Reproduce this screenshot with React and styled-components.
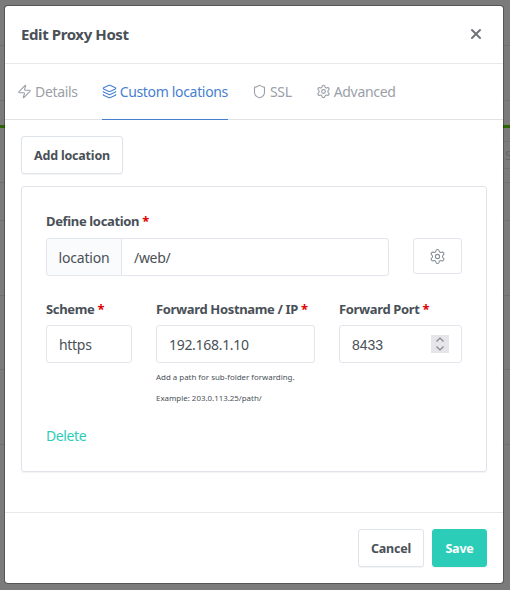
import { createGlobalStyle, styled } from "styled-components";
import { Zap, Layers, Shield, Settings, X } from "lucide-react";

const GlobalStyle = createGlobalStyle`
    html, body {
        margin: 0;
        padding: 0;
        background: #7f7f7f;
        font-family: "Noto Sans", "Open Sans", sans-serif;
    }
    * {
        box-sizing: border-box;
    }
`;

const Page = styled.div`
    position: relative;
    width: 510px;
    height: 590px;
    overflow: hidden;
    background: #7b7b7b;
`;

const BackdropRow = styled.div`
    height: ${prop => prop.height}px;
    margin-left: ${prop => prop.offset || 0}px;
    padding-left: ${prop => prop.indent || 0}px;
    display: flex;
    align-items: center;
    font-size: 13px;
    color: #666;
    border-bottom: 1px solid ${prop => (prop.plain ? "transparent" : "#707070")};
`;

const GreenLine = styled.div`
    height: 3px;
    background: #2c6600;
`;

const Modal = styled.div`
    position: absolute;
    left: 5px;
    top: 6px;
    width: 498px;
    height: 577px;
    background: #fff;
    border-radius: 3px;
    box-shadow: 0 0 0 1px rgba(0, 0, 0, 0.3);
    display: flex;
    flex-direction: column;
    color: #495057;
`;

const Header = styled.div`
    height: 58px;
    padding: 0 19px 1px 16px;
    display: flex;
    justify-content: space-between;
    align-items: center;
    border-bottom: 1px solid #e6e8ea;
    h5 {
        margin: 0;
        font-size: 15px;
        font-weight: 700;
        letter-spacing: -0.4px;
        color: #495057;
    }
`;

const CloseButton = styled.span`
    display: flex;
    color: #6e7479;
`;

const Tabs = styled.div`
    height: 56px;
    padding: 0 0 0 12px;
    display: flex;
    gap: 24px;
    border-bottom: 1px solid #e0e2e5;
`;

const Tab = styled.div`
    display: flex;
    align-items: center;
    gap: 3px;
    height: 56px;
    font-size: 14px;
    letter-spacing: -0.33px;
    color: ${prop => (prop.active ? "#467fcf" : "#9aa0a8")};
    border-bottom: 1px solid ${prop => (prop.active ? "#467fcf" : "transparent")};
`;

const Body = styled.div`
    flex: 1;
    padding: 16px 16px 0;
`;

const Button = styled.button`
    height: 38px;
    padding: 0 12px;
    font-family: inherit;
    font-size: 12.5px;
    font-weight: 700;
    letter-spacing: -0.2px;
    border-radius: 3px;
    color: ${prop => (prop.primary ? "#fff" : "#495057")};
    background: ${prop => (prop.primary ? "#2bcdb8" : "#fff")};
    border: 1px solid ${prop => (prop.primary ? "#2bcdb8" : "#dfe3ea")};
    box-shadow: 0 1px 1px rgba(0, 0, 0, 0.05);
`;

const AddButton = styled(Button)`
    width: 102px;
    padding: 0;
`;

const Card = styled.div`
    margin-top: 12px;
    height: 286px;
    padding: 24px 24px 0;
    border: 1px solid #e0e4ea;
    border-radius: 3px;
    box-shadow: 0 1px 1px rgba(0, 0, 0, 0.05);
`;

const Label = styled.div`
    height: 20px;
    margin-bottom: ${prop => (prop.tight ? 6 : 7)}px;
    font-size: 13px;
    line-height: 20px;
    font-weight: 700;
    letter-spacing: -0.35px;
    white-space: nowrap;
    span {
        color: #e00000;
    }
`;

const LocationRow = styled.div`
    display: flex;
    align-items: flex-start;
    gap: 24px;
`;

const LocationGroup = styled.div`
    display: flex;
    width: 343px;
    height: 38px;
    font-size: 14px;
    letter-spacing: -0.2px;
`;

const LocationAddon = styled.div`
    width: 76px;
    display: flex;
    align-items: center;
    justify-content: center;
    background: #fafbfc;
    border: 1px solid #e3e6ec;
    border-radius: 3px 0 0 3px;
`;

const Field = styled.div`
    flex: 1;
    height: 38px;
    display: flex;
    align-items: center;
    justify-content: space-between;
    padding: 1px 12px 0;
    border: 1px solid #e3e6ec;
    border-left: ${prop => (prop.joined ? "0" : "1px solid #e3e6ec")};
    border-radius: ${prop => (prop.joined ? "0 3px 3px 0" : "3px")};
    font-size: 14px;
    letter-spacing: -0.3px;
`;

const GearButton = styled.div`
    width: 49px;
    height: 36px;
    display: flex;
    align-items: center;
    justify-content: center;
    border: 1px solid #e3e6ec;
    border-radius: 3px;
    color: #868e96;
`;

const FormRow = styled.div`
    display: grid;
    grid-template-columns: 86px 159px 123px;
    gap: 24px;
    margin-top: 23px;
`;

const PortValue = styled.span`
    font-family: "Liberation Sans", Arial, sans-serif;
    font-size: 14px;
    letter-spacing: 0;
`;

const Spinner = styled.svg`
    display: block;
    width: 18px;
    height: 18px;
    margin-top: -1px;
    background: #e6e6ea;
`;

const Hint = styled.p`
    margin: ${prop => (prop.first ? 8 : 9)}px 0 0;
    font-size: 7.9px;
    line-height: 12px;
    white-space: nowrap;
    color: #495057;
`;

const DeleteLink = styled.div`
    margin-top: 22px;
    font-size: 14px;
    letter-spacing: -0.4px;
    color: #2bcdb8;
`;

const Footer = styled.div`
    height: 71px;
    padding: 0 16px;
    display: flex;
    align-items: center;
    justify-content: flex-end;
    gap: 8px;
    border-top: 1px solid #e6e8ea;
`;

const FooterSlot = styled.div`
    width: ${prop => prop.width}px;
    ${Button} {
        width: 100%;
    }
`;

const tabs = [
    { label: "Details", Icon: Zap },
    { label: "Custom locations", Icon: Layers, active: true },
    { label: "SSL", Icon: Shield },
    { label: "Advanced", Icon: Settings },
];

const Required = () => <span> *</span>;

const App = () => {
    return (
        <Page>
            <GlobalStyle />
            <BackdropRow height={46} />
            <BackdropRow height={55} />
            <BackdropRow height={24} plain />
            <GreenLine />
            <BackdropRow height={14} offset={400} />
            <BackdropRow height={27} offset={400} indent={105}>S</BackdropRow>
            <BackdropRow height={14} />
            <BackdropRow height={38} />
            <BackdropRow height={75} />
            <BackdropRow height={74} />
            <BackdropRow height={75} />
            <Modal>
                <Header>
                    <h5>Edit Proxy Host</h5>
                    <CloseButton><X size={16} strokeWidth={3} /></CloseButton>
                </Header>
                <Tabs>
                    {tabs.map(({ label, Icon, active }) => (
                        <Tab key={label} active={active}>
                            <Icon size={15} strokeWidth={1.75} />
                            {label}
                        </Tab>
                    ))}
                </Tabs>
                <Body>
                    <AddButton>Add location</AddButton>
                    <Card>
                        <Label>Define location<Required /></Label>
                        <LocationRow>
                            <LocationGroup>
                                <LocationAddon>location</LocationAddon>
                                <Field joined>/web/</Field>
                            </LocationGroup>
                            <GearButton><Settings size={17} strokeWidth={1.5} /></GearButton>
                        </LocationRow>
                        <FormRow>
                            <div>
                                <Label tight>Scheme<Required /></Label>
                                <Field>https</Field>
                            </div>
                            <div>
                                <Label tight>Forward Hostname / IP<Required /></Label>
                                <Field>192.168.1.10</Field>
                                <Hint first>Add a path for sub-folder forwarding.</Hint>
                                <Hint>Example: 203.0.113.25/path/</Hint>
                            </div>
                            <div>
                                <Label tight>Forward Port<Required /></Label>
                                <Field>
                                    <PortValue>8433</PortValue>
                                    <Spinner viewBox="0 0 18 18" fill="none" stroke="#85858a" strokeWidth="1.2">
                                        <path d="M5.5 6.5 9 3l3.5 3.5" />
                                        <path d="M5.5 11.5 9 15l3.5-3.5" />
                                    </Spinner>
                                </Field>
                            </div>
                        </FormRow>
                        <DeleteLink>Delete</DeleteLink>
                    </Card>
                </Body>
                <Footer>
                    <FooterSlot width={66}><Button>Cancel</Button></FooterSlot>
                    <FooterSlot width={55}><Button primary>Save</Button></FooterSlot>
                </Footer>
            </Modal>
        </Page>
    )
}

export default App
